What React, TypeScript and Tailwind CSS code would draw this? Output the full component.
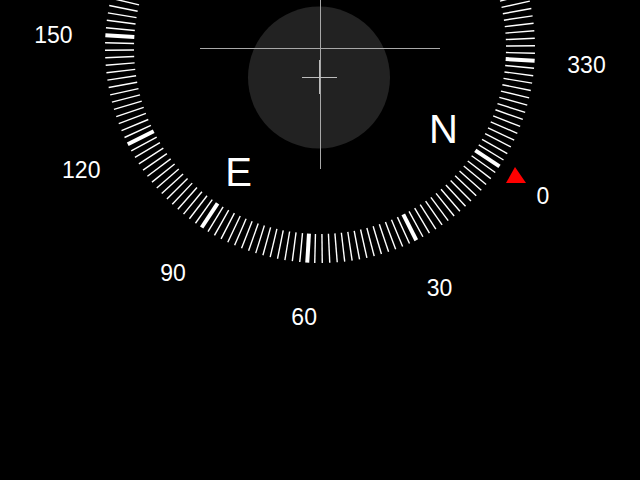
import React from "react";

// compass geometry (screen px)
const CX = 320;
const CY = 48;
const OFFSET = 33.4; // screen angle of heading 0, clockwise from +x
const TICK_IN = 186;
const TICK_OUT = 215;
const LABEL_R = 267;
const CARD_R = 148;

const polar = (deg: number, r: number) => {
  const a = ((OFFSET + deg) * Math.PI) / 180;
  return { x: CX + r * Math.cos(a), y: CY + r * Math.sin(a) };
};

const cardinals: Record<number, string> = { 0: "N", 90: "E", 180: "S", 270: "W" };

const App = () => {
  const ticks = Array.from({ length: 180 }, (_, i) => i * 2);
  const labels = Array.from({ length: 12 }, (_, i) => i * 30);

  return (
    <div className="w-[640px] h-[480px] bg-black overflow-hidden">
      <svg width="640" height="480" viewBox="0 0 640 480" className="block">
        <circle cx="319" cy="77.5" r="71" fill="#222222" />

        {/* crosshair */}
        <line x1="320.5" y1="0" x2="320.5" y2="169" stroke="#a8a8a8" strokeWidth="1" />
        <line x1="200" y1="48.5" x2="440" y2="48.5" stroke="#a8a8a8" strokeWidth="1" />
        <line x1="302" y1="77.5" x2="337" y2="77.5" stroke="#bdbdbd" strokeWidth="1" />
        <line x1="319.5" y1="60" x2="319.5" y2="94" stroke="#bdbdbd" strokeWidth="1" />

        {ticks.map((d) => {
          const major = d % 30 === 0;
          const a = polar(d, TICK_IN);
          const b = polar(d, TICK_OUT);
          return (
            <line
              key={d}
              x1={a.x}
              y1={a.y}
              x2={b.x}
              y2={b.y}
              stroke="#ffffff"
              strokeWidth={major ? 4 : 1.4}
            />
          );
        })}

        {labels.map((d) => {
          const p = polar(d, LABEL_R);
          if (p.y < 15) return null; // off the top of the screen
          const dy = p.x < CX ? 2.5 : 1;
          return (
            <text
              key={d}
              x={p.x}
              y={p.y + dy}
              textAnchor="middle"
              dominantBaseline="central"
              fill="#ffffff"
              fontSize="23"
              fontFamily="'Liberation Sans', Arial, sans-serif"
            >
              {d}
            </text>
          );
        })}

        {Object.entries(cardinals).map(([d, t]) => {
          const p = polar(Number(d), CARD_R);
          if (p.y < 20) return null;
          return (
            <text
              key={t}
              x={p.x}
              y={p.y}
              textAnchor="middle"
              dominantBaseline="central"
              fill="#ffffff"
              fontSize="40"
              fontFamily="'Liberation Sans', Arial, sans-serif"
            >
              {t}
            </text>
          );
        })}

        <polygon points="515,167 506,183 526,183" fill="#ff0000" />
      </svg>
    </div>
  );
};

export default App;
